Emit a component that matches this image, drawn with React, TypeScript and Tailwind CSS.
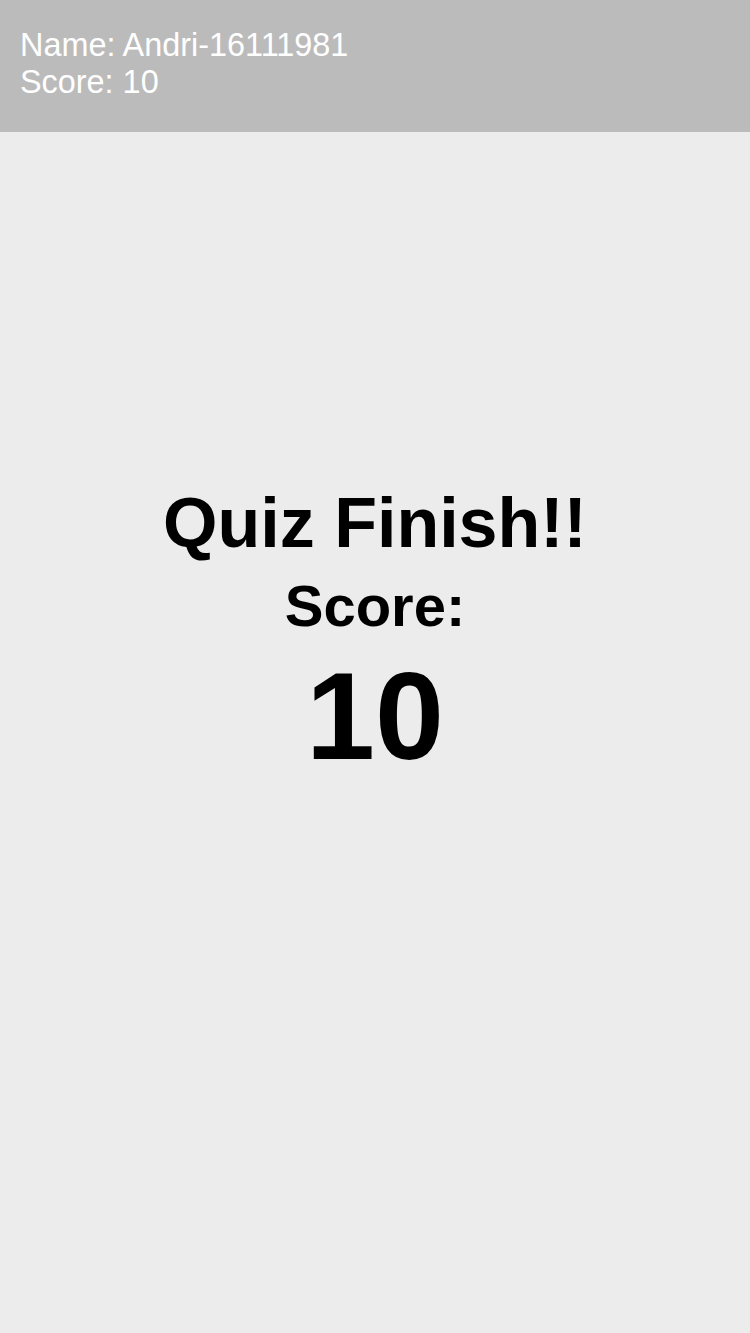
import React from 'react';

export default function App() {
  return (
    <div className="min-h-[1333px] bg-[#ececec] font-['Liberation_Sans',Arial,sans-serif]">
      <header className="h-[132px] bg-[#bbbbbb] px-[20px] pt-[27px] text-[32.4px] leading-[37px] text-white">
        <div>Name: Andri-16111981</div>
        <div>Score: 10</div>
      </header>
      <main className="flex flex-col items-center pt-[356px] font-bold text-black">
        <h1 className="text-[70px] leading-none">Quiz Finish!!</h1>
        <h2 className="mt-[19px] text-[58px] leading-none">Score:</h2>
        <div className="mt-[19px] text-[124px] leading-none">10</div>
      </main>
    </div>
  );
}
